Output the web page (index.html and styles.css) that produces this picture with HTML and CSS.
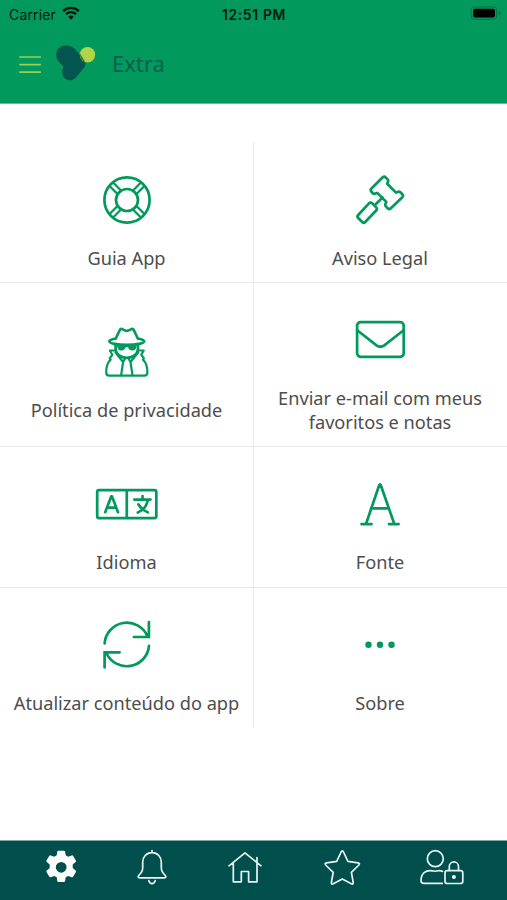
FILE: index.html
```html
<!DOCTYPE html>
<html lang="pt">
<head>
<meta charset="utf-8">
<title>Extra</title>
<link rel="stylesheet" href="styles.css">
</head>
<body>
<div class="app">
  <header class="header">
    <div class="status">
      <div class="carrier">
        <span class="carrier-name">Carrier</span>
        <svg class="wifi" width="18" height="14" viewBox="62 6 18 14">
          <path d="M63.2 11a11.4 11.4 0 0 1 15.6 0" fill="none" stroke="#03150d" stroke-width="2.4"/>
          <path d="M66 14.2a7.3 7.3 0 0 1 10 0" fill="none" stroke="#03150d" stroke-width="2.3"/>
          <path d="M68.3 16.7a4.2 4.2 0 0 1 5.4 0L71 19.8z" fill="#03150d"/>
        </svg>
      </div>
      <span class="time">12:51 PM</span>
      <svg class="battery" width="32" height="15" viewBox="470 6 32 15">
        <rect x="471.2" y="6.8" width="25.6" height="12.6" rx="3.8" fill="none" stroke="#03784a" stroke-width="1.2"/>
        <rect x="473" y="8.8" width="22" height="8.8" rx="2" fill="#000"/>
        <path d="M499 11v4.4q1.800-.7 1.800-2.200T499 11z" fill="#03784a"/>
      </svg>
    </div>
    <div class="titlebar">
      <svg class="menu" width="24" height="20" viewBox="18 54 24 20">
        <path d="M19.300 57h21.600M19.300 64.700h21.600M19.300 72.200h21.600" stroke="#9bd056" stroke-width="1.700"/>
      </svg>
      <svg class="logo" width="42" height="38" viewBox="55 44 42 38">
        <path d="M66 45.500C59.500 45.500 56.300 50 56.300 55c0 4.500 3 7.600 7.300 11.500-2.600 4.500-1.800 13.700 6.400 13.700 3.200 0 5.300-1.700 7.200-4.200L84.500 67c1.500-2 1.500-5-.5-7L75.300 49.500c-2.500-2.700-5.300-4-9.300-4z" fill="#04544f"/>
        <circle cx="87.500" cy="54.700" r="7.700" fill="#b0d446"/>
        <path d="M80 53.500a7.700 7.700 0 0 0 5.200 8.400l-1.200-2z" fill="#2e7544"/>
      </svg>
      <h1 class="title">Extra</h1>
    </div>
  </header>

  <main class="grid">
    <a class="cell">
      <svg class="icon" width="50" height="50" viewBox="102 175 50 50">
        <circle cx="127" cy="200" r="22.600"/><circle cx="127" cy="200" r="11"/>
        <path class="spokes" d="M121 190.500l-7.200-7.200M117.500 194l-7.200-7.200M133 190.500l7.200-7.200M136.500 194l7.200-7.200M121 209.500l-7.200 7.200M117.500 206l-7.200 7.200M133 209.500l7.200 7.200M136.500 206l7.200 7.200"/>
      </svg>
      <span class="label">Guia App</span>
    </a>
    <a class="cell">
      <svg class="icon" width="50" height="50" viewBox="355 175 50 50">
        <path d="M382.700 177.300q1.700-1.200 3.200.3l1.700 1.800q1.100 1.200.3 2.700l-.7 1.700 8.800 8.800 1.700-.7q1.500-.7 2.700.4l1.900 1.900q1.400 1.500 0 3l-11.700 11.200q-1.500 1.300-3-.2l-1.600-1.600q-1.200-1.200-.5-2.800l.8-1.900-9-9-1.800.7q-1.700.7-2.900-.6l-1.300-1.500q-1.300-1.500.2-3zM382.500 197.500l-6.300 6.300M369 203.300q1.600-1.500 3.200 0l4 4q1.500 1.600 0 3.200l-11 11.500q-1.500 1.500-3 0l-4-4q-1.500-1.500 0-3z"/>
      </svg>
      <span class="label">Aviso Legal</span>
    </a>
    <a class="cell">
      <svg class="icon" width="50" height="50" viewBox="102 327 50 50">
        <path d="M115.800 338.500c-4 .8-6.600 1.900-6.400 2.900.3 2.100 8.300 3.500 17.400 3.500s17.100-1.400 17.400-3.500c.1-1-2.400-2.100-6.400-2.900M115.800 338.500l3.900-8.300q.8-1.700 2.500-1.100l3.200 1.500q1.400.5 2.800 0l3.200-1.500q1.700-.6 2.500 1.100l3.900 8.300"/>
        <path d="M115.600 344.800v3.700c0 5.200 4.500 9.300 11.200 9.300s11.200-4.100 11.200-9.300v-3.700"/>
        <path d="M117 344.500h19.700c0 4.500-1.800 6-4.500 6-2.600 0-3.500-1.500-4.200-3.200h-2.300c-.7 1.700-1.600 3.200-4.200 3.200-2.700 0-4.500-1.500-4.500-6z" class="solid"/>
        <path d="M114.300 350.500h-4.400l2.400 4.300-2.600 3.600 1 1.200c-3.600 3-4.500 8-4.500 12.900q0 3.100 3.100 3.100h35q3.100 0 3.100-3.100c0-4.900-.9-9.900-4.500-12.900l1-1.200-2.600-3.600 2.400-4.300h-4.400M115.500 352.500l7.600 9.500-2 13.300M138.100 352.500l-7.600 9.500 2 13.300M123.100 362l2-3.500M130.500 362l-2-3.500" stroke-width="2.200"/>
      </svg>
      <span class="label">Política de privacidade</span>
    </a>
    <a class="cell">
      <svg class="icon" width="50" height="50" viewBox="355 316 50 50">
        <rect x="357.100" y="323.200" width="46.600" height="34.600" rx="3.500"/>
        <path d="M357.500 331.500l19 14.900q3.900 2.700 7.800 0l19-14.900"/>
      </svg>
      <span class="label">Enviar e-mail com meus<br>favoritos e notas</span>
    </a>
    <a class="cell lower">
      <svg class="icon" width="64" height="50" viewBox="95 479 64 50">
        <path d="M99 490.200h55.500q1.800 0 1.800 1.800v24.300q0 1.800-1.800 1.800H99q-1.800 0-1.800-1.800V492q0-1.800 1.800-1.800zM126.800 490.200v28"/>
        <path d="M105.200 512.200l6-15.800h.8l6 15.800M107.300 507.700h8.600M134.300 499.600h16.200M142.500 496v3.300M138.300 504.300c2.500 4 5.500 6.500 9.500 8M148 500c-1.500 6.500-5 10.500-10.200 12.500"/>
      </svg>
      <span class="label">Idioma</span>
    </a>
    <a class="cell lower">
      <svg class="icon" width="50" height="50" viewBox="355 479 50 50">
        <path d="M361.500 524.100h10M389 524.100h9.600M366 524l13.100-38.500q.9-2.500 1.800 0L394.300 524M371 508.300h18"/>
      </svg>
      <span class="label">Fonte</span>
    </a>
    <a class="cell lower">
      <svg class="icon refresh" width="50" height="50" viewBox="102 620 50 50">
        <path d="M104.600 643.300a22.400 22.400 0 0 1 42.800-7.300M148.900 622.200v14.800h-15M149 645.800a22.300 22.300 0 0 1-42.500 7.400M104.600 667.500v-15.200h15"/>
      </svg>
      <span class="label">Atualizar conteúdo do app</span>
    </a>
    <a class="cell lower">
      <svg class="icon dots" width="50" height="50" viewBox="355 620 50 50">
        <circle cx="368.500" cy="644.800" r="3.200"/><circle cx="380" cy="644.800" r="3.200"/><circle cx="391.500" cy="644.800" r="3.200"/>
      </svg>
      <span class="label">Sobre</span>
    </a>
  </main>

  <nav class="tabs">
    <svg width="34" height="36" viewBox="44 849 34 36">
      <path fill="#fff" fill-rule="evenodd" d="M58.500 850.700h5.400q1 0 1.200 1l.6 3.600 2.500 1.400 3.400-1.300q1-.4 1.600.6l2.700 4.600q.5.900-.3 1.500l-2.900 2.500v3.400l2.900 2.500q.8.600.3 1.500l-2.700 4.600q-.6 1-1.600.6l-3.400-1.300-2.500 1.400-.6 3.600q-.2 1-1.200 1h-5.400q-1 0-1.200-1l-.6-3.600-2.500-1.400-3.400 1.300q-1 .4-1.600-.6l-2.700-4.600q-.5-.9.300-1.500l2.900-2.500v-3.400l-2.900-2.500q-.8-.6-.3-1.500l2.700-4.600q.6-1 1.600-.6l3.400 1.300 2.500-1.400.6-3.600q.2-1 1.200-1zM61.200 861.900a5.400 5.400 0 1 0 0 10.800 5.400 5.400 0 0 0 0-10.800z"/>
    </svg>
    <svg class="line" width="34" height="36" viewBox="135 849 34 36">
      <path d="M152 850.500v2M152 852.700c-5.800 0-9.300 4.300-9.300 9.500v5.300c0 3.800-1.700 5.800-3.700 7.600q-2 2.400.8 2.800h24.400q2.800-.4.800-2.800c-2-1.800-3.700-3.800-3.700-7.600v-5.300c0-5.200-3.500-9.500-9.300-9.500zM148.800 880.600q.8 3 3.200 3t3.200-3"/>
    </svg>
    <svg class="line" width="36" height="36" viewBox="227 849 36 36">
      <path d="M229 865.800l16-13 16 13M233.300 863v18.800h8v-10.300h7.300v10.300h8.400V863M257 862v-4.500"/>
    </svg>
    <svg class="line" width="38" height="36" viewBox="323 849 38 36">
      <path d="M341.100 852q1.200-2.200 2.400 0l4.400 9.300 10.200 1.500q2.200.5.800 2.200l-7.500 7.300 1.800 10.200q.2 2.200-1.900 1.300l-9-4.900-9 4.900q-2.100.9-1.900-1.300l1.800-10.200-7.500-7.300q-1.400-1.700.8-2.200l10.200-1.500z"/>
    </svg>
    <svg class="line" width="46" height="36" viewBox="419 849 46 36">
      <circle cx="435.300" cy="858.700" r="8"/>
      <path d="M442.500 871.300q-2.300-1-4.300-.5-2.900.9-5.800 0c-7-1.300-11.300 3-11.400 9.700q0 2.900 2.900 2.900h18.400"/>
      <rect x="445" y="870.600" width="17.800" height="12.900" rx="2.300"/>
      <path d="M449.300 870.500v-4a4.600 4.600 0 0 1 9.200 0v4"/>
      <circle cx="453.900" cy="877" r="1.200" fill="#fff"/>
    </svg>
  </nav>
</div>
</body>
</html>
```
FILE: styles.css
```css
* { box-sizing: border-box; }
body { margin: 0; background: #fff; font-family: "Noto Sans", sans-serif; }
.app { width: 507px; height: 900px; display: flex; flex-direction: column; }

.header { height: 104px; background: #02995c; border-bottom: 1px solid #62bf97; flex: none; }
.status {
  height: 28px;
  padding: 0 5px 0 9px;
  display: grid;
  grid-template-columns: 1fr auto 1fr;
  align-items: center;
  font-family: Inter, sans-serif;
  font-size: 14px;
  color: #03190f;
}
.carrier { display: flex; align-items: center; gap: 6px; }
.carrier-name { letter-spacing: 0.15px; }
.wifi { margin-top: -2px; }
.time { font-weight: 600; letter-spacing: 0.6px; margin-right: 3px; }
.battery { justify-self: end; margin-top: -1px; }
.titlebar { height: 70px; padding-left: 18px; display: flex; align-items: center; }
.menu { margin-top: 2px; }
.logo { margin-left: 13px; }
.title { margin: 0 0 0 15px; font-size: 22px; font-weight: 400; line-height: 30px; color: #04614f; }

.grid {
  flex: 1;
  margin-top: 38px;
  display: grid;
  grid-template-columns: 254px 253px;
  grid-template-rows: 141px 163.500px 141px 140px;
}
.cell {
  display: flex;
  flex-direction: column;
  align-items: center;
  justify-content: center;
  gap: 22px;
  padding-top: 21px;
  border-bottom: 1px solid #e9e9e9;
}
.cell.lower { padding-top: 20px; }
.cell:nth-child(odd) { border-right: 1px solid #e9e9e9; }
.cell:nth-child(even) { padding-right: 1px; }
.cell:nth-last-child(-n+2) { border-bottom: 0; }
.icon { flex: none; fill: none; stroke: #02995c; stroke-width: 2.700; stroke-linecap: round; stroke-linejoin: round; }
.icon .spokes { stroke-width: 2.300; }
.icon .solid { fill: #02995c; stroke: none; }
.refresh { stroke-linejoin: miter; }
.icon.dots { fill: #02995c; stroke: none; }
.label { font-size: 18.200px; line-height: 23.500px; color: #4d4d4d; text-align: center; white-space: nowrap; }

.tabs {
  height: 60px;
  flex: none;
  padding: 0 42px 7px 44px;
  display: grid;
  grid-template-columns: 91px 92px 96px 96px 46px;
  align-items: center;
  background: #004f4d;
  border-top: 1px solid #84a8a6;
}
.line { fill: none; stroke: #e8f4f4; stroke-width: 1.700; stroke-linecap: round; stroke-linejoin: round; }
```
